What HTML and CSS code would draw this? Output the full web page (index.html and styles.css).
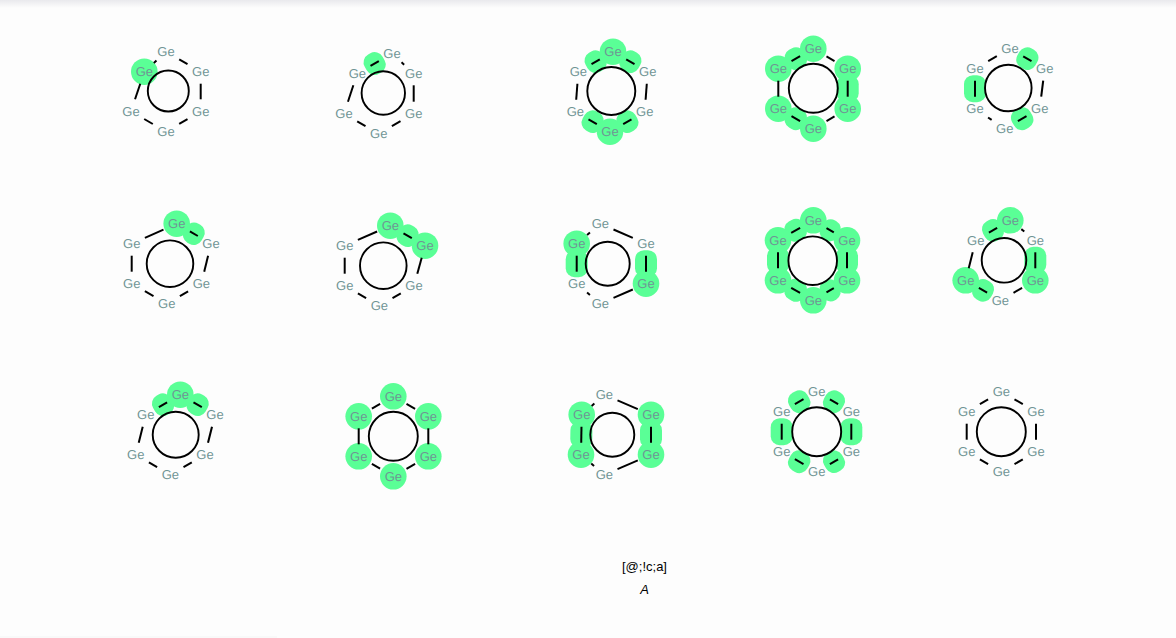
FILE: index.html
```html
<!DOCTYPE html>
<html lang="en">

<head>
    <meta charset="UTF-8">
    <title>Substructure matches</title>
    <link rel="stylesheet" href="styles.css">
</head>

<body>
    <div class="top-shadow"></div>
    <div id="molecules" class="molecule-grid"></div>
    <div class="caption">
        <p class="smarts">[@;!c;a]</p>
        <p class="atom-name">A</p>
    </div>
    <div class="bottom-edge"></div>
    <script src="script.js"></script>
</body>

</html>
```

FILE: styles.css
```css
html, body {
    margin: 0;
    padding: 0;
}

body {
    width: 1176px;
    height: 638px;
    overflow: hidden;
    display: flex;
    flex-direction: column;
    background: #fdfdfd;
    font-family: "Liberation Sans", Arial, sans-serif;
}

.top-shadow {
    height: 8px;
    flex: none;
    background: linear-gradient(#e9e9ed, #fdfdfd);
}

.molecule-grid {
    display: grid;
    grid-template-columns: repeat(5, 224px);
    grid-auto-rows: 172px;
    padding-left: 56px;
    flex: none;
}

.molecule {
    display: block;
    width: 224px;
    height: 172px;
    overflow: visible;
}

.highlight {
    fill: #5aff96;
}

.bond {
    stroke: #000;
    stroke-width: 2;
}

.ring {
    fill: none;
    stroke: #000;
    stroke-width: 1.9;
}

.atom {
    fill: #6f9494;
    font-family: "Liberation Sans", sans-serif;
    font-size: 13px;
    text-anchor: middle;
    text-rendering: geometricPrecision;
}

.caption {
    flex: 1;
    padding: 35px 0 0 113px;
    text-align: center;
    color: #000;
    font-size: 13px;
}

.caption p {
    margin: 0;
    height: 23px;
    line-height: 15px;
}

.atom-name {
    font-style: italic;
}

.bottom-edge {
    width: 277px;
    height: 2px;
    flex: none;
    background: #f9f9f9;
}
```

FILE: script.js
```js
// order of the atoms in each ring: top, upper right, lower right, bottom, lower left, upper left
// a bond number n goes from atom n to atom n+1
const molecules = [
    { ring: [168.3, 91, 20.5], atoms: [[166, 51.7], [200.7, 71.7], [200.7, 111.3], [166, 131.7], [131, 111.3], [144.3, 71.7]], hlAtoms: [5], hlBonds: [] },
    { ring: [383.3, 93, 21.7], atoms: [[392, 53.7], [413.7, 73.3], [413.7, 113.7], [378.7, 133.7], [344, 113.7], [357.3, 73.3]], hlAtoms: [], hlBonds: [5] },
    { ring: [611.3, 91, 24], atoms: [[613, 51.7], [647.7, 71.7], [644.7, 111.7], [610, 131.7], [575.3, 111.7], [578.3, 71.7]], hlAtoms: [0, 3], hlBonds: [0, 2, 3, 5] },
    { ring: [813.3, 88.3, 24.5], atoms: [[813.3, 48.7], [847.7, 68.7], [847.7, 108.7], [813.3, 128.7], [778.3, 108.7], [778.3, 68.7]], hlAtoms: [0, 1, 2, 3, 4, 5], hlBonds: [1, 3, 5] },
    { ring: [1008.3, 88, 23.3], atoms: [[1010, 48.7], [1044.7, 68.7], [1039.7, 108.7], [1004.7, 128.7], [975, 108.7], [975, 68.7]], hlAtoms: [], hlBonds: [0, 2, 4] },

    { ring: [170, 263.7, 23.3], atoms: [[176.7, 223.7], [211, 243.7], [201.3, 283.7], [166.7, 303.7], [131.7, 283.7], [131.7, 243.7]], hlAtoms: [0], hlBonds: [0] },
    { ring: [383.3, 265.7, 23.3], atoms: [[390.3, 225.7], [425, 245.7], [414, 285.7], [379.3, 305.7], [344.7, 285.7], [344.7, 245.7]], hlAtoms: [0, 1], hlBonds: [0] },
    { ring: [607.7, 263.7, 22], atoms: [[600.3, 223.7], [646, 243.7], [646, 283.7], [600.3, 303.7], [576.7, 283.7], [576.7, 243.7]], hlAtoms: [2, 5], hlBonds: [1, 4] },
    { ring: [812.7, 260.7, 24.3], atoms: [[813.3, 220.3], [847, 240.3], [847, 280.3], [813.3, 300.3], [778, 280.3], [778, 240.3]], hlAtoms: [0, 1, 2, 3, 4, 5], hlBonds: [0, 1, 2, 3, 4, 5] },
    { ring: [1004, 260.3, 22.3], atoms: [[1010.3, 220.3], [1035.3, 240.3], [1035.3, 280.3], [1000.3, 300.3], [965.7, 280.3], [975.7, 240.3]], hlAtoms: [0, 2, 4], hlBonds: [1, 3, 5] },

    { ring: [175.7, 434.7, 23], atoms: [[180.3, 394.7], [215, 414.7], [205, 454.7], [170.3, 474.7], [135.7, 454.7], [145.7, 414.7]], hlAtoms: [0], hlBonds: [0, 5] },
    { ring: [393.3, 436.3, 24.5], atoms: [[393.3, 396.3], [428.3, 416.3], [428.3, 456.3], [393.3, 476.3], [358.7, 456.3], [358.7, 416.3]], hlAtoms: [0, 1, 2, 3, 4, 5], hlBonds: [] },
    { ring: [612.3, 434.7, 22], atoms: [[604.3, 394.7], [651, 414.7], [651, 454.7], [604.3, 474.7], [581, 454.7], [581.7, 414.7]], hlAtoms: [1, 2, 4, 5], hlBonds: [1, 4] },
    { ring: [816.7, 431.7, 24.5], atoms: [[816.7, 391.7], [851.3, 411.7], [851.3, 451.7], [816.7, 471.7], [781.7, 451.7], [781.7, 411.7]], hlAtoms: [], hlBonds: [0, 1, 2, 3, 4, 5] },
    { ring: [1001.3, 431.7, 24.5], atoms: [[1001.3, 391.7], [1036, 411.7], [1036, 451.7], [1001.3, 471.7], [966.7, 451.7], [966.7, 411.7]], hlAtoms: [], hlBonds: [] }
];

const LABEL_W = 13.2; // half box kept free round a label
const LABEL_H = 12;
const MAX_CUT = 0.44; // close atoms still keep a short stroke between them
const ATOM_R = 13.3;
const NS = "http://www.w3.org/2000/svg";

function el(parent, name, attrs) {
    const node = document.createElementNS(NS, name);
    for (const key in attrs) node.setAttribute(key, attrs[key]);
    parent.appendChild(node);
    return node;
}

// the part of a bond which is not hidden by the two labels
function bondEnds(a, b) {
    const dx = b[0] - a[0];
    const dy = b[1] - a[1];
    const t = Math.min(MAX_CUT, LABEL_W / Math.abs(dx || 0.001), LABEL_H / Math.abs(dy || 0.001));
    return [a[0] + dx * t, a[1] + dy * t, b[0] - dx * t, b[1] - dy * t];
}

const grid = document.getElementById("molecules");

molecules.forEach(function (mol, i) {
    const left = 56 + (i % 5) * 224;
    const top = 8 + Math.floor(i / 5) * 172;
    const svg = el(grid, "svg", { class: "molecule", viewBox: left + " " + top + " 224 172" });
    const ends = mol.atoms.map((a, n) => bondEnds(a, mol.atoms[(n + 1) % 6]));

    mol.hlBonds.forEach(function (n) {
        const [x1, y1, x2, y2] = ends[n];
        const length = Math.hypot(x2 - x1, y2 - y1) + 11;
        const angle = Math.atan2(y2 - y1, x2 - x1) * 180 / Math.PI;
        el(svg, "rect", {
            class: "highlight", x: -length / 2, y: -11, width: length, height: 22, rx: 9,
            transform: "translate(" + (x1 + x2) / 2 + " " + (y1 + y2) / 2 + ") rotate(" + angle + ")"
        });
    });
    mol.hlAtoms.forEach(function (n) {
        el(svg, "circle", { class: "highlight", cx: mol.atoms[n][0], cy: mol.atoms[n][1], r: ATOM_R });
    });

    ends.forEach(function (e) {
        el(svg, "line", { class: "bond", x1: e[0], y1: e[1], x2: e[2], y2: e[3] });
    });
    el(svg, "circle", { class: "ring", cx: mol.ring[0], cy: mol.ring[1], r: mol.ring[2] });

    mol.atoms.forEach(function (a) {
        el(svg, "text", { class: "atom", x: a[0], y: a[1] + 4.6 }).textContent = "Ge";
    });
});
```
